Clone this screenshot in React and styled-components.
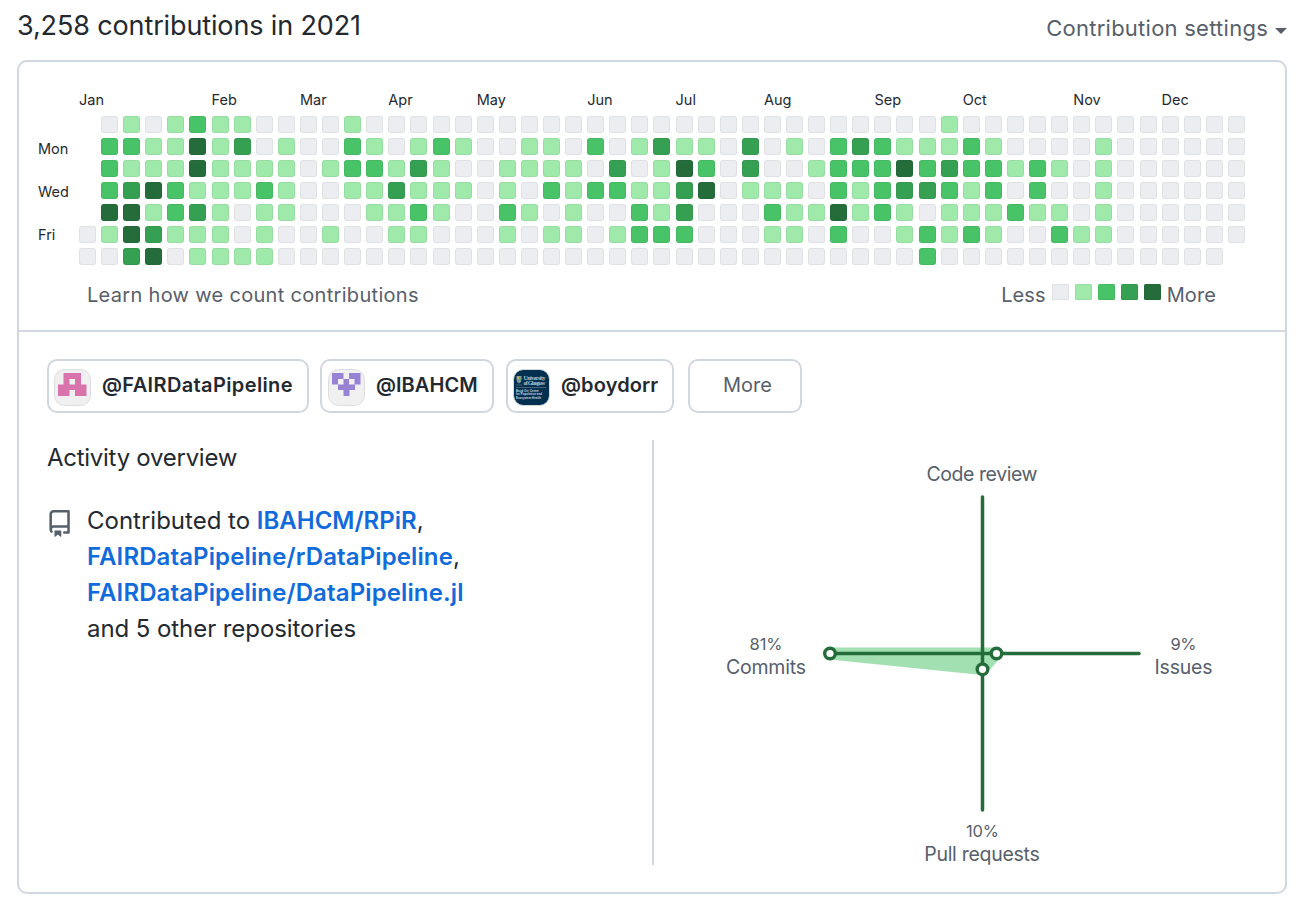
import React from "react";
import styled, { createGlobalStyle } from "styled-components";

const Global = createGlobalStyle`
  * { box-sizing: border-box; }
  body { margin: 0; background: #fff; color: #24292f; font-family: Inter, "Liberation Sans", sans-serif; }
`;

const LEVELS = ["#ebedf0", "#9fe9aa", "#48c367", "#36a052", "#246d3a"];

const WEEKS = [
  ".....00", "0222410", "1213443", "0114134", "1112210", "2441311", "1111111", "1311001",
  "0012111", "0111100", "0000000", "0010010", "1221000", "0121100", "0013110", "0131210",
  "0211100", "0101000", "0000000", "0011210", "0110100", "0112010", "0011110", "0202000",
  "0032010", "0101220", "0311120", "0143320", "0124000", "0000000", "0331000", "0001210",
  "0101110", "0010100", "0222420", "0321100", "0222200", "0143110", "0123022", "1132110",
  "0221120", "0122110", "0010200", "0022100", "0010120", "0000010", "0111110", "0000000",
  "0000000", "0000000", "0000000", "0000000", "000000.",
];

const MONTHS = [
  ["Jan", 0], ["Feb", 6], ["Mar", 10], ["Apr", 14], ["May", 18], ["Jun", 23],
  ["Jul", 27], ["Aug", 31], ["Sep", 36], ["Oct", 40], ["Nov", 45], ["Dec", 49],
];

const Page = styled.main`
  width: 1308px;
  height: 912px;
  padding: 0 21px 0 17px;
`;
const Header = styled.header`
  display: flex;
  justify-content: space-between;
  height: 60px;
`;
const Title = styled.h2`
  margin: 10px 0 0;
  font-size: 27px;
  line-height: 32px;
  font-weight: 400;
  letter-spacing: -0.13px;
  white-space: nowrap;
`;
const Settings = styled.div`
  display: flex;
  align-items: center;
  height: 28px;
  margin-top: 14px;
  gap: 7px;
  color: #57606a;
  font-size: 22px;
  letter-spacing: 0.25px;
  white-space: nowrap;
`;
const Caret = styled.span`
  width: 0;
  height: 0;
  margin-top: 6px;
  border: 6px solid transparent;
  border-top-color: currentColor;
  border-bottom: 0;
`;
const Panel = styled.section`
  height: 834px;
  border: 2px solid #d0d7de;
  border-radius: 10px;
`;
const Calendar = styled.div`
  height: 270px;
  padding: 29px 0 0 19px;
  border-bottom: 2px solid #d0d7de;
`;
const MonthRow = styled.div`
  display: grid;
  grid-template-columns: repeat(53, 17px);
  column-gap: 5.096px;
  height: 25px;
  padding-left: 41px;
`;
const Month = styled.span`
  grid-row: 1;
  grid-column: ${(p) => p.$week + 1};
  font-size: 14.5px;
  line-height: 18px;
  white-space: nowrap;
`;
const CalendarBody = styled.div`
  display: flex;
`;
const Weekdays = styled.div`
  width: 41px;
  padding-top: 24px;
  font-size: 14.5px;
  line-height: 17px;
  display: flex;
  flex-direction: column;
  gap: 26.2px;
`;
const Grid = styled.div`
  display: grid;
  grid-auto-flow: column;
  grid-template-rows: repeat(7, 17px);
  grid-auto-columns: 17px;
  column-gap: 5.096px;
  row-gap: 5.06px;
`;
const Day = styled.i`
  width: 17px;
  height: 17px;
  border-radius: 3px;
  background: ${(p) => LEVELS[p.$level] || "transparent"};
  box-shadow: ${(p) => (p.$level === "." ? "none" : "inset 0 0 0 1px rgba(27, 31, 35, 0.06)")};
`;
const CalendarFooter = styled.div`
  display: flex;
  justify-content: space-between;
  align-items: center;
  height: 28px;
  margin-top: 16px;
  padding: 0 69px 0 49px;
  color: #57606a;
  font-size: 20px;
  letter-spacing: 0.1px;
  white-space: nowrap;
`;
const LearnLink = styled.a`
  letter-spacing: 0.31px;
`;
const Legend = styled.div`
  display: flex;
  align-items: center;
`;
const Swatches = styled.div`
  display: flex;
  gap: 6px;
  margin: 0 6px 7px;
`;
const Swatch = styled(Day)`
  height: 16px;
  border-radius: 1.5px;
`;
const Overview = styled.div`
  padding: 27px 28px 0;
`;
const Orgs = styled.div`
  display: flex;
`;
const Org = styled.a`
  display: flex;
  align-items: center;
  justify-content: ${(p) => (p.$plain ? "center" : "flex-start")};
  width: ${(p) => p.$width}px;
  height: 54px;
  margin-right: ${(p) => p.$gap || 0}px;
  padding: 0 0 2px ${(p) => p.$inset || 5}px;
  border: 2px solid #d0d7de;
  border-radius: 10px;
  font-size: 20px;
  font-weight: ${(p) => (p.$plain ? 400 : 600)};
  letter-spacing: ${(p) => p.$spacing || 0}px;
  color: ${(p) => (p.$plain ? "#57606a" : "#24292f")};
  white-space: nowrap;
`;
const Avatar = styled.svg`
  flex: none;
  width: 37px;
  height: 37px;
  margin: 4px 11px 0 0;
`;
const Columns = styled.div`
  display: flex;
  margin-top: 27px;
`;
const Activity = styled.div`
  width: 607px;
  height: 425px;
  border-right: 2px solid #d0d7de;
`;
const Subtitle = styled.h3`
  margin: 2px 0 0;
  font-size: 24px;
  line-height: 32px;
  font-weight: 400;
  letter-spacing: -0.27px;
`;
const Contributed = styled.div`
  display: flex;
  margin-top: 29px;
`;
const RepoIcon = styled.svg`
  flex: none;
  width: 27.2px;
  height: 29.3px;
  margin: 7px 14.300px 0 -1.500px;
  fill: #57606a;
`;
const Repos = styled.div`
  font-size: 24px;
  line-height: 36px;
  white-space: nowrap;
`;
const Line = styled.div`
  letter-spacing: ${(p) => p.$spacing || 0}px;
`;
const Repo = styled.a`
  color: #126bda;
  font-weight: 600;
`;
const Radar = styled.svg`
  display: block;
  width: 600px;
  height: 425px;
  overflow: visible;
  font-family: inherit;
  fill: #57606a;
  text-anchor: middle;
`;

function PinkAvatar() {
  return (
    <Avatar viewBox="0 0 37 37">
      <rect x="0.5" y="0.5" width="36" height="36" rx="10" fill="#f0f0f0" stroke="#dcdde0" />
      <path fill="#d873ac" fillRule="evenodd" d="M9.500 4h17.500v11.500h5.500v11.500H21v-6h-5.500v6H4V15.500h5.500zM15.500 10v5.500h5.500v-5.500z" />
    </Avatar>
  );
}

function PurpleAvatar() {
  return (
    <Avatar viewBox="0 0 37 37">
      <rect x="0.5" y="0.5" width="36" height="36" rx="10" fill="#f0f0f0" stroke="#dcdde0" />
      <path fill="#9782d4" fillRule="evenodd" d="M4 4h11.500v6h5.500V4h11.500v11.500h-5.500v5.500h-5.500v6h-6v-6H10v-5.500H4zM10 10v5.500h5.500v-5.500zM21 10v5.500h5.500v-5.500z" />
    </Avatar>
  );
}

function GlasgowAvatar() {
  return (
    <Avatar viewBox="0 0 37 37">
      <rect x="0.5" y="0.5" width="36" height="36" rx="10" fill="#03304f" stroke="#d5dade" />
      <path d="M3.500 7h5v3.500q0 3-2.500 4-2.500-1-2.500-4z" fill="#8298a4" />
      <path d="M4.500 7.500h1.500v2.500h-1.500z" fill="#d9b44c" />
      <path d="M6.500 9.500h1.500v2h-1.500z" fill="#5d9e6b" />
      <path d="M3 16h6M3 18.500h30" stroke="#60798a" strokeWidth="0.7" />
      <g fill="#b4c2cc" fontFamily="Liberation Serif, serif" fontSize="6">
        <text x="10.500" y="10.500" textLength="22">University</text>
        <text x="10.500" y="15.500" textLength="22">of Glasgow</text>
      </g>
      <g fill="#d5dee5" fontFamily="Liberation Sans, sans-serif" fontWeight="700" fontSize="3.500">
        <text x="3" y="22.500" textLength="23" lengthAdjust="spacingAndGlyphs">Boyd Orr Centre</text>
        <text x="3" y="26" textLength="26" lengthAdjust="spacingAndGlyphs">for Population and</text>
        <text x="3" y="29.500" textLength="25" lengthAdjust="spacingAndGlyphs">Ecosystem Health</text>
      </g>
    </Avatar>
  );
}

export default function App() {
  return (
    <Page>
      <Global />
      <Header>
        <Title>3,258 contributions in 2021</Title>
        <Settings>Contribution settings<Caret /></Settings>
      </Header>
      <Panel>
        <Calendar>
          <MonthRow>
            {MONTHS.map(([name, week]) => <Month key={name} $week={week}>{name}</Month>)}
          </MonthRow>
          <CalendarBody>
            <Weekdays><span>Mon</span><span>Wed</span><span>Fri</span></Weekdays>
            <Grid>
              {WEEKS.flatMap((week, w) => [...week].map((level, d) => <Day key={`${w}-${d}`} $level={level} />))}
            </Grid>
          </CalendarBody>
          <CalendarFooter>
            <LearnLink>Learn how we count contributions</LearnLink>
            <Legend>
              Less
              <Swatches>{LEVELS.map((c, i) => <Swatch key={c} $level={i} />)}</Swatches>
              More
            </Legend>
          </CalendarFooter>
        </Calendar>
        <Overview>
          <Orgs>
            <Org $width={262} $gap={11} $spacing={0.37}><PinkAvatar />@FAIRDataPipeline</Org>
            <Org $width={174} $gap={12} $inset={6} $spacing={0.05}><PurpleAvatar />@IBAHCM</Org>
            <Org $width={168} $gap={14} $spacing={0.12}><GlasgowAvatar />@boydorr</Org>
            <Org $width={114} $plain>More</Org>
          </Orgs>
          <Columns>
            <Activity>
              <Subtitle>Activity overview</Subtitle>
              <Contributed>
                <RepoIcon viewBox="0 0 16 17.230">
                  <path fillRule="evenodd" d="M2 2.500A2.500 2.500 0 014.500 0h8.750a.75.75 0 01.75.75v12.500a.75.75 0 01-.75.75h-2.500a.75.75 0 110-1.500h1.750v-2h-8a1 1 0 00-.714 1.700.75.75 0 01-1.072 1.050A2.495 2.495 0 012 11.500v-9zm10.500-1V9h-8c-.356 0-.694.074-1 .208V2.500a1 1 0 011-1h8zM5 12.250v3.250a.25.25 0 00.4.2l1.450-1.087a.25.25 0 01.3 0L8.600 15.700a.25.25 0 00.4-.2v-3.250a.25.25 0 00-.25-.25h-3.500a.25.25 0 00-.25.25z" />
                </RepoIcon>
                <Repos>
                  <Line>Contributed to <Repo>IBAHCM/RPiR</Repo>,</Line>
                  <Line $spacing={0.12}><Repo>FAIRDataPipeline/rDataPipeline</Repo>,</Line>
                  <Line $spacing={0.12}><Repo>FAIRDataPipeline/DataPipeline.jl</Repo></Line>
                  <Line $spacing={-0.07}>and 5 other repositories</Line>
                </Repos>
              </Contributed>
            </Activity>
            <Radar viewBox="654 440 600 425">
              <path d="M830 653.500L982.500 653.500L996 653.500L982.500 669Z" fill="#48c367" stroke="#48c367" strokeWidth="12" strokeLinejoin="round" opacity="0.5" />
              <path d="M982.500 497V810M830 653.500H1139" stroke="#246d3a" strokeWidth="3.500" strokeLinecap="round" />
              <g fill="#fff" stroke="#246d3a" strokeWidth="3.400">
                <circle cx="830" cy="653.500" r="5.300" />
                <circle cx="996.500" cy="653.500" r="5.300" />
                <circle cx="982.500" cy="669.300" r="5.300" />
              </g>
              <g fontSize="19.500">
                <text x="982" y="481" textLength="111">Code review</text>
                <text x="766" y="674" textLength="80">Commits</text>
                <text x="1183.500" y="674" textLength="58">Issues</text>
                <text x="982" y="861" textLength="115.500">Pull requests</text>
              </g>
              <g fontSize="16.500">
                <text x="766" y="650" textLength="33">81%</text>
                <text x="1183.500" y="650" textLength="26">9%</text>
                <text x="982.500" y="837" textLength="33">10%</text>
              </g>
            </Radar>
          </Columns>
        </Overview>
      </Panel>
    </Page>
  );
}
